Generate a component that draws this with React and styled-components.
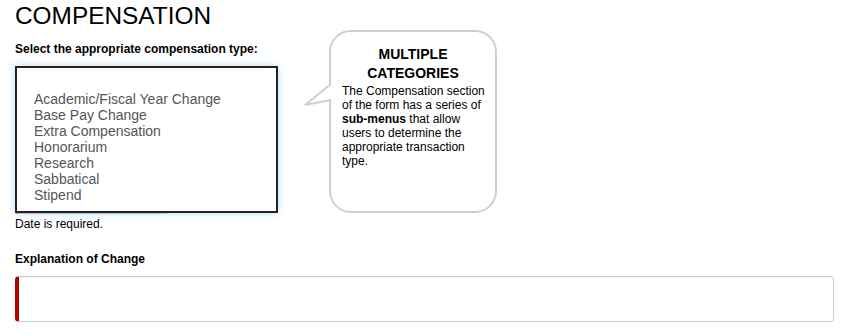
import React from 'react'
import styled, { createGlobalStyle } from 'styled-components'

const options = [
  'Academic/Fiscal Year Change',
  'Base Pay Change',
  'Extra Compensation',
  'Honorarium',
  'Research',
  'Sabbatical',
  'Stipend',
]

function App() {
  return (
    <Page>
      <Global />
      <Title>COMPENSATION</Title>

      <Label>Select the appropriate compensation type:</Label>
      <Field>
        <DateGroup>
          <DateInput />
          <DateButton />
        </DateGroup>
        <ListBox>
          {options.map((o) => (
            <Option key={o}>{o}</Option>
          ))}
        </ListBox>
      </Field>
      <ErrorText>Date is required.</ErrorText>

      <Label $top={21}>Explanation of Change</Label>
      <TextArea />

      <Bubble>
        <Tail width="28" height="24" viewBox="0 0 28 24">
          <polyline points="27,0 1,21 27,16" fill="#fff" stroke="#cfcfcf" strokeWidth="2" />
        </Tail>
        <BubbleTitle>
          <span>MULTIPLE</span>
          <span>CATEGORIES</span>
        </BubbleTitle>
        <BubbleText>
          The Compensation section of the form has a series of <b>sub-menus</b> that allow
          users to determine the appropriate transaction type.
        </BubbleText>
      </Bubble>
    </Page>
  )
}

const Global = createGlobalStyle`
  body {
    margin: 0;
    background: #fff;
    font-family: "Liberation Sans", Arial, sans-serif;
  }
`

const Page = styled.div`
  position: relative;
  padding: 0 15px;
  height: 335px;
  box-sizing: border-box;
  overflow: hidden;
`

const Title = styled.h1`
  margin: 3px 0 0;
  font-size: 24.4px;
  line-height: 26px;
  font-weight: normal;
  color: #000;
`

const Label = styled.div`
  margin-top: ${(p) => p.$top ?? 13}px;
  font-size: 12px;
  line-height: 14px;
  font-weight: bold;
  color: #000;
`

const Field = styled.div`
  position: relative;
  margin-top: 10px;
  width: 263px;
  height: 148px;
  display: flex;
  align-items: flex-end;
`

const DateGroup = styled.div`
  display: flex;
  height: 34px;
`

const DateInput = styled.div`
  width: 111px;
  border: 1px solid #ccc;
  border-left: 4px solid #b30000;
  border-radius: 3px 0 0 3px;
`

const DateButton = styled.div`
  width: 37px;
  border: 1px solid #ccc;
  border-left: none;
  border-radius: 0 4px 4px 0;
`

const ListBox = styled.div`
  position: absolute;
  top: 0;
  left: 0;
  width: 263px;
  height: 147px;
  box-sizing: border-box;
  padding: 23px 0 8px 17px;
  background: #fff;
  border: 2px solid #222;
  box-shadow: 0 0 8px rgba(102, 175, 233, 0.45);
`

const Option = styled.div`
  font-size: 14px;
  line-height: 16px;
  color: #555;
`

const ErrorText = styled.div`
  margin-top: 3px;
  font-size: 12px;
  line-height: 14px;
  color: #000;
`

const TextArea = styled.div`
  margin-top: 10px;
  height: 46px;
  box-sizing: border-box;
  border: 1px solid #ccc;
  border-left: 4px solid #b30000;
  border-radius: 4px;
  box-shadow: inset 0 1px 1px rgba(0, 0, 0, 0.05);
`

const Bubble = styled.div`
  position: absolute;
  left: 329px;
  top: 30px;
  width: 168px;
  height: 183px;
  box-sizing: border-box;
  padding: 13px 4px 0 11px;
  border: 2px solid #cfcfcf;
  border-radius: 22px;
  background: #fff;
`

const Tail = styled.svg`
  position: absolute;
  left: -27px;
  top: 52px;
  overflow: visible;
`

const BubbleTitle = styled.div`
  display: flex;
  flex-direction: column;
  align-items: center;
  padding-right: 7px;
  font-size: 14px;
  line-height: 19px;
  font-weight: bold;
  color: #000;
`

const BubbleText = styled.div`
  margin-top: 1px;
  font-size: 12px;
  line-height: 14px;
  color: #000;

  b {
    font-weight: bold;
  }
`

export default App
